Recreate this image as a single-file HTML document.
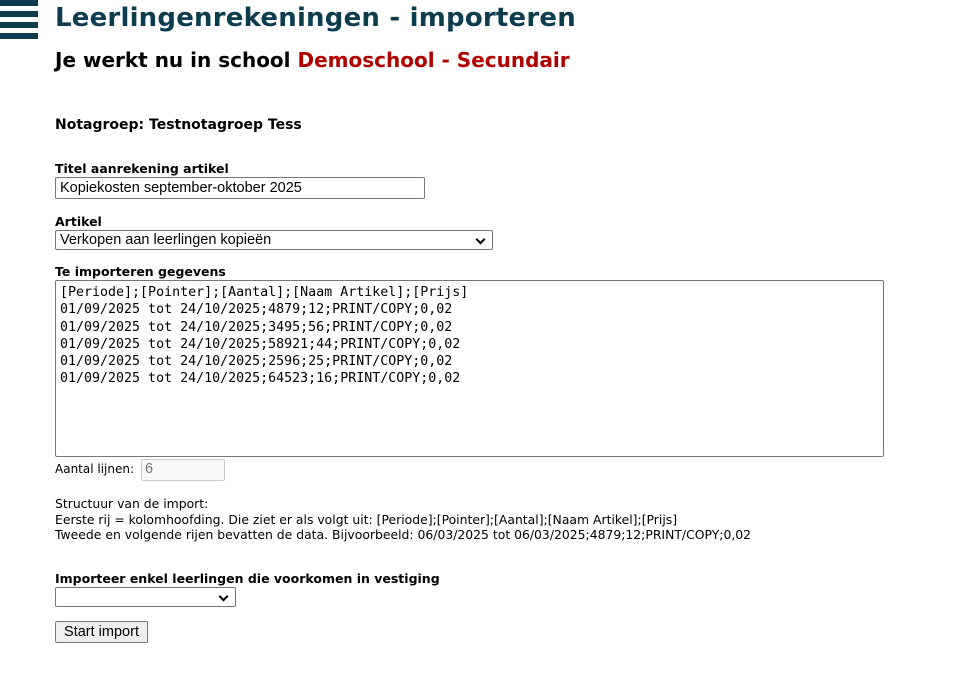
<!DOCTYPE html>
<html><head><meta charset="utf-8"><style>
body{margin:0;background:#fff;font-family:"DejaVu Sans",Verdana,sans-serif;color:#000;width:967px;height:678px;overflow:hidden;position:relative}
.a{position:absolute;white-space:nowrap}
.bar{position:absolute;left:0;width:38px;height:6px;background:#0d3c4f}
.lbl{font-size:12.5px;font-weight:bold}
.box{position:absolute;border:1px solid #767676;border-radius:2px;background:#fff;box-sizing:border-box;font-family:"Liberation Sans",Arial,sans-serif;font-size:14.5px}
.sel::after{content:"";position:absolute;right:8px;top:5px;width:5px;height:5px;border-right:2px solid #000;border-bottom:2px solid #000;transform:rotate(45deg)}
</style></head><body>
<div class="bar" style="top:0"></div>
<div class="bar" style="top:11px"></div>
<div class="bar" style="top:22px"></div>
<div class="bar" style="top:33px"></div>
<div class="a" style="left:55px;top:3px;font-size:26px;font-weight:bold;color:#0d3c4f;letter-spacing:0.2px">Leerlingenrekeningen - importeren</div>
<div class="a" style="left:55px;top:48px;font-size:20px;font-weight:bold">Je werkt nu in school <span style="color:#b00000">Demoschool - Secundair</span></div>
<div class="a" style="left:55px;top:117px;font-size:14px;font-weight:bold">Notagroep: Testnotagroep Tess</div>
<div class="a lbl" style="left:55px;top:161px">Titel aanrekening artikel</div>
<div class="box" style="left:55px;top:177px;width:370px;height:22px;padding:2px 4px">Kopiekosten september-oktober 2025</div>
<div class="a lbl" style="left:55px;top:214px">Artikel</div>
<div class="box sel" style="left:55px;top:230px;width:438px;height:20px;padding:1px 4px">Verkopen aan leerlingen kopieën</div>
<div class="a lbl" style="left:55px;top:264px">Te importeren gegevens</div>
<div class="box" style="left:55px;top:280px;width:829px;height:177px;padding:3px 4px;font-family:'DejaVu Sans Mono',Consolas,monospace;font-size:13.3px;line-height:17.3px;white-space:pre">[Periode];[Pointer];[Aantal];[Naam Artikel];[Prijs]
01/09/2025 tot 24/10/2025;4879;12;PRINT/COPY;0,02
01/09/2025 tot 24/10/2025;3495;56;PRINT/COPY;0,02
01/09/2025 tot 24/10/2025;58921;44;PRINT/COPY;0,02
01/09/2025 tot 24/10/2025;2596;25;PRINT/COPY;0,02
01/09/2025 tot 24/10/2025;64523;16;PRINT/COPY;0,02</div>
<div class="a" style="left:55px;top:462px;font-size:12px">Aantal lijnen:</div>
<div class="box" style="left:141px;top:459px;width:84px;height:22px;background:#f8f8f8;border-color:#ccc;color:#777;padding:1px 3px">6</div>
<div class="a" style="left:55px;top:496px;font-size:12.4px;line-height:15.5px">Structuur van de import:<br>Eerste rij = kolomhoofding. Die ziet er als volgt uit: [Periode];[Pointer];[Aantal];[Naam Artikel];[Prijs]<br>Tweede en volgende rijen bevatten de data. Bijvoorbeeld: 06/03/2025 tot 06/03/2025;4879;12;PRINT/COPY;0,02</div>
<div class="a lbl" style="left:55px;top:571px">Importeer enkel leerlingen die voorkomen in vestiging</div>
<div class="box sel" style="left:55px;top:587px;width:181px;height:20px"></div>
<div class="box" style="left:55px;top:621px;width:93px;height:22px;background:#efefef;text-align:center;line-height:20px">Start import</div>
</body></html>
